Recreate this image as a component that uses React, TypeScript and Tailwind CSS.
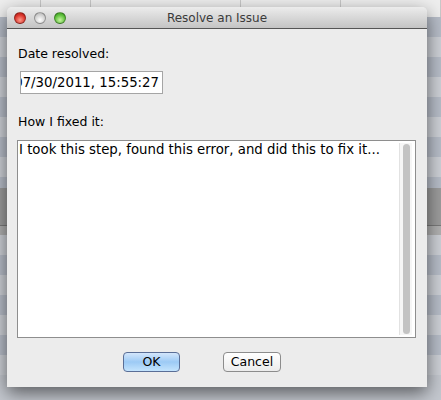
import React from "react";

const font = { fontFamily: '"DejaVu Sans", "Liberation Sans", sans-serif' };

const rows = [
  { h: 20, c: "bg-[#b7bdc8]" },
  { h: 20, c: "bg-[#cdd0d6]" },
  { h: 20, c: "bg-[#b7bdc8]" },
  { h: 20, c: "bg-[#cdd0d6]" },
  { h: 20, c: "bg-[#b7bdc8]" },
  { h: 20, c: "bg-[#cdd0d6]" },
  { h: 20, c: "bg-[#b7bdc8]" },
  { h: 20, c: "bg-[#cdd0d6]" },
  { h: 11, c: "bg-[#b7bdc8]" },
  { h: 37, c: "bg-[#9c9c9c]" },
  { h: 10, c: "bg-[#b0b0b0] border-t border-[#7a7a7a]" },
  { h: 20, c: "bg-[#cdd0d6]" },
  { h: 20, c: "bg-[#b7bdc8]" },
  { h: 20, c: "bg-[#cdd0d6]" },
  { h: 20, c: "bg-[#b7bdc8]" },
  { h: 20, c: "bg-[#cdd0d6]" },
  { h: 20, c: "bg-[#b7bdc8]" },
  { h: 20, c: "bg-[#cdd0d6]" },
];

const Backdrop = () => {
  const cols = [41, 50, 150, 100, 100];
  return (
    <div className="absolute inset-0 flex flex-col bg-[#c4c8cf]">
      <div className="flex h-[17px] shrink-0 bg-[#eeeeee]">
        {cols.map((w, i) => (
          <div key={i} className="border-r border-[#c8c8c8]" style={{ width: w }} />
        ))}
      </div>
      {rows.map((r, i) => (
        <div key={i} className={"shrink-0 " + r.c} style={{ height: r.h }} />
      ))}
    </div>
  );
};

const TrafficLight = ({ color }: { color: string }) => (
  <div
    className="h-[12px] w-[12px] rounded-full border border-black/30"
    style={{ background: color }}
  />
);

export default function App() {
  return (
    <div className="relative h-[400px] w-[441px] overflow-hidden" style={font}>
      <Backdrop />
      <div className="absolute left-[7px] top-[7px] flex h-[380px] w-[420px] flex-col overflow-hidden rounded-t-[5px] bg-[#ececec] shadow-[0_6px_18px_rgba(0,0,0,0.55)]">
        <div className="relative flex h-[22px] shrink-0 items-center border-b border-[#555] bg-gradient-to-b from-[#ececec] to-[#c4c4c4] px-[7px]">
          <div className="flex gap-[8px]">
            <TrafficLight color="radial-gradient(circle at 50% 70%, #ff9a8a, #d9332a 60%, #a01b14)" />
            <TrafficLight color="radial-gradient(circle at 50% 70%, #ffffff, #d0d0d0 60%, #a8a8a8)" />
            <TrafficLight color="radial-gradient(circle at 50% 70%, #c8f5a0, #5cbf3a 60%, #33861c)" />
          </div>
          <div className="absolute inset-x-0 text-center text-[12px] text-[#3a3a3a]">Resolve an Issue</div>
        </div>

        <div className="flex flex-1 flex-col px-[10px] pt-[17px]">
          <div className="pl-[1px] text-[12.5px] leading-[15px] text-black">Date resolved:</div>
          {/* scrolled text field: leading "0" slides past the left edge */}
          <div className="ml-[3px] mt-[10px] flex h-[23px] w-[143px] shrink-0 items-center justify-end overflow-hidden whitespace-nowrap border border-[#a5a5a5] bg-white pr-[3px] text-[13.3px] text-black">
            07/30/2011, 15:55:27
          </div>
          <div className="mt-[20px] pl-[1px] text-[12.5px] leading-[15px] text-black">How I fixed it:</div>
          <div className="mt-[11px] flex h-[198px] w-[399px] shrink-0 border border-[#8e8e8e] bg-white">
            <div className="flex-1 pl-[1px] pt-[1px] text-[13.3px] leading-[15px] text-black">
              I took this step, found this error, and did this to fix it...
            </div>
            <div className="mr-[3px] mt-[2px] mb-[2px] flex w-[13px] justify-center border-l border-[#e2e2e2] bg-[#f6f6f6] py-[1px]">
              <div className="w-[7px] rounded-full bg-[#c3c3c3]" />
            </div>
          </div>

          <div className="mt-[14px] flex justify-center gap-[43px] pr-[30px]">
            <button className="h-[20px] w-[57px] rounded-[4px] border border-[#5a6e96] bg-gradient-to-b from-[#d3e6fb] via-[#9ccaf5] to-[#c4e4fd] text-[12.5px] text-black">
              OK
            </button>
            <button className="h-[20px] w-[58px] rounded-[4px] border border-[#8c8c8c] bg-gradient-to-b from-[#ffffff] to-[#ececec] text-[12.5px] text-black">
              Cancel
            </button>
          </div>
        </div>
      </div>
    </div>
  );
}
